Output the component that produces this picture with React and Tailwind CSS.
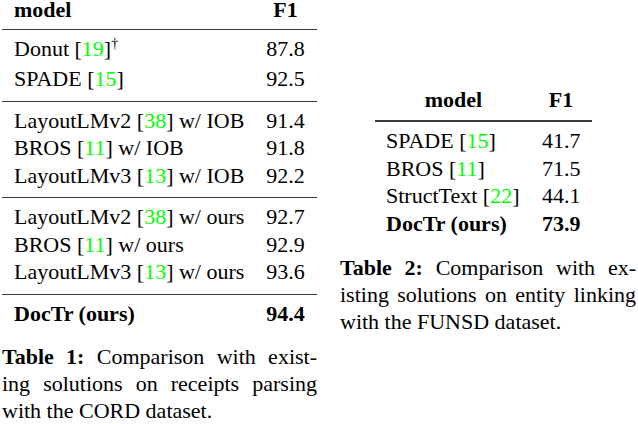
import React from "react";

const Cite = ({ n }) => (
  <>
    [<span className="text-[#00ff00]">{n}</span>]
  </>
);

const Rule = () => <div className="h-[2px] bg-[#3a3a3a]" />;

const cordGroups = [
  [
    {
      name: (
        <>
          Donut <Cite n="19" />
          <span className="text-[14px] relative -top-[8px] text-black">†</span>
        </>
      ),
      f1: "87.8",
    },
    { name: <>SPADE <Cite n="15" /></>, f1: "92.5" },
  ],
  [
    { name: <>LayoutLMv2 <Cite n="38" /> w/ IOB</>, f1: "91.4" },
    { name: <>BROS <Cite n="11" /> w/ IOB</>, f1: "91.8" },
    { name: <>LayoutLMv3 <Cite n="13" /> w/ IOB</>, f1: "92.2" },
  ],
  [
    { name: <>LayoutLMv2 <Cite n="38" /> w/ ours</>, f1: "92.7" },
    { name: <>BROS <Cite n="11" /> w/ ours</>, f1: "92.9" },
    { name: <>LayoutLMv3 <Cite n="13" /> w/ ours</>, f1: "93.6" },
  ],
];

const funsdRows = [
  { name: <>SPADE <Cite n="15" /></>, f1: "41.7" },
  { name: <>BROS <Cite n="11" /></>, f1: "71.5" },
  { name: <>StructText <Cite n="22" /></>, f1: "44.1" },
];

// justified caption line (hyphenated break, like the LaTeX output)
const Line = ({ children }) => (
  <div className="text-justify [text-align-last:justify] whitespace-nowrap">{children}</div>
);

export default function App() {
  return (
    <div
      className="w-[638px] h-[424px] bg-white text-black text-[22px] flex"
      style={{ fontFamily: '"Liberation Serif", "Times New Roman", serif' }}
    >
      {/* Table 1 */}
      <div className="ml-[2px] w-[315px] flex flex-col">
        <div className="flex font-bold leading-[20px] px-[12px] pb-[9px]">
          <span className="flex-1">model</span>
          <span className="w-[39px] text-center">F1</span>
        </div>
        <Rule />
        {cordGroups.map((group, gi) => (
          <React.Fragment key={gi}>
            <div className="pt-[5px] pb-[8px] leading-[27.5px]">
              {group.map((row, ri) => (
                <div key={ri} className="flex px-[12px]">
                  <span className="flex-1 whitespace-nowrap">{row.name}</span>
                  <span className="w-[39px] text-center">{row.f1}</span>
                </div>
              ))}
            </div>
            <Rule />
          </React.Fragment>
        ))}
        <div className="pt-[5px] leading-[27.5px] font-bold flex px-[12px]">
          <span className="flex-1">DocTr (ours)</span>
          <span className="w-[39px] text-center">94.4</span>
        </div>
        <div className="mt-[16px] leading-[27px]">
          <Line>
            <b>Table 1:</b> Comparison with exist-
          </Line>
          <Line>ing solutions on receipts parsing</Line>
          <div>with the CORD dataset.</div>
        </div>
      </div>

      {/* Table 2 */}
      <div className="ml-[23px] w-[296px] flex flex-col pt-[90px]">
        <div className="ml-[35px] w-[217px]">
          <div className="grid grid-cols-[135px_38px] gap-x-[21px] px-[11px] font-bold leading-[20px] pb-[10px]">
            <span className="text-center">model</span>
            <span className="text-center">F1</span>
          </div>
          <Rule />
          <div className="grid grid-cols-[135px_38px] gap-x-[21px] px-[11px] pt-[5px] leading-[27.5px]">
            {funsdRows.map((row, i) => (
              <React.Fragment key={i}>
                <span className="whitespace-nowrap">{row.name}</span>
                <span className="text-center">{row.f1}</span>
              </React.Fragment>
            ))}
            <span className="font-bold whitespace-nowrap">DocTr (ours)</span>
            <span className="font-bold text-center">73.9</span>
          </div>
        </div>
        <div className="mt-[17px] leading-[27px]">
          <Line>
            <b>Table 2:</b> Comparison with ex-
          </Line>
          <Line>isting solutions on entity linking</Line>
          <div>with the FUNSD dataset.</div>
        </div>
      </div>
    </div>
  );
}
